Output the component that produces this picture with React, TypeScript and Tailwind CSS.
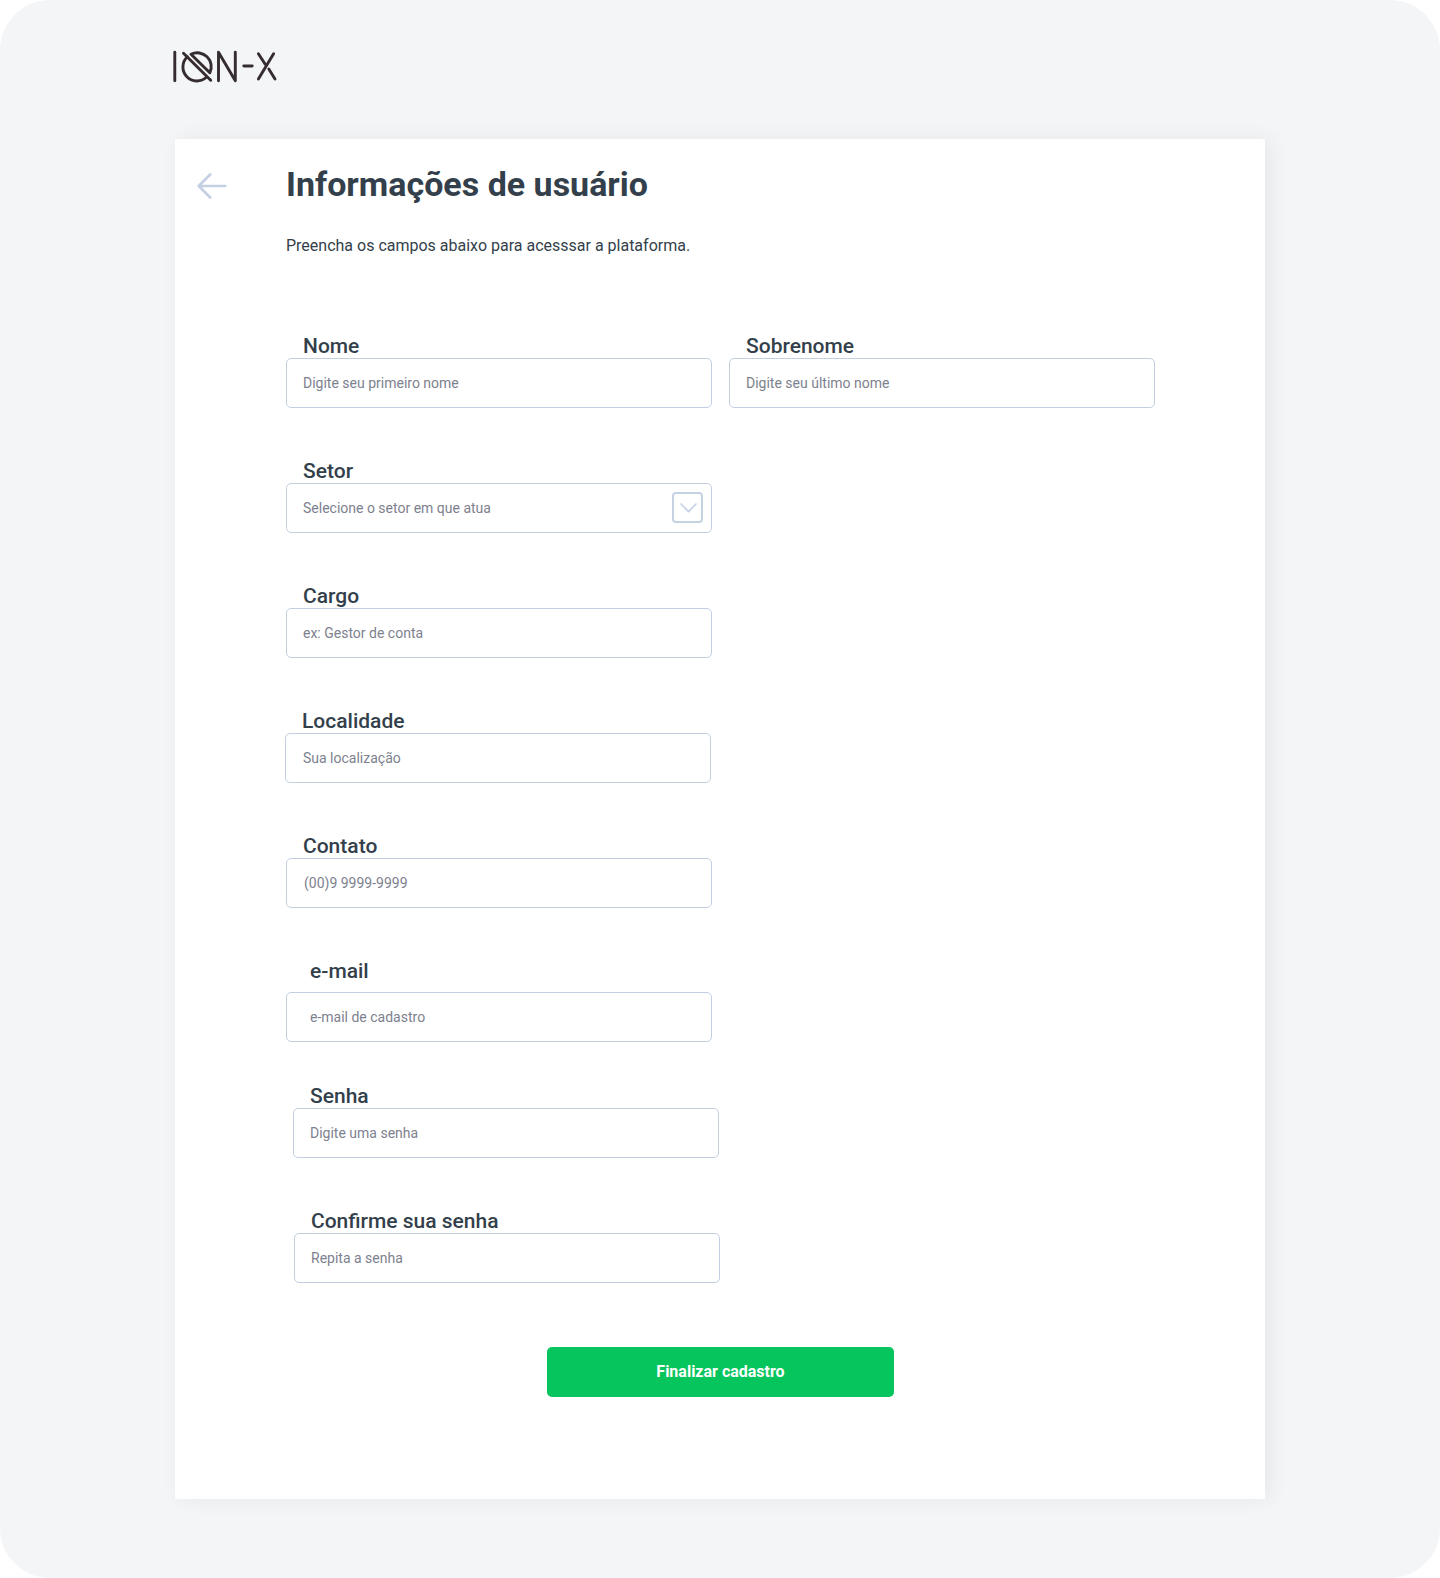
import React from "react";

type FieldProps = {
  id: string;
  label: string;
  placeholder: string;
  type?: string;
  labelClass?: string;
  inputClass?: string;
  select?: boolean;
};

function Field({ id, label, placeholder, type = "text", labelClass = "pl-[17px]", inputClass = "pl-4", select }: FieldProps) {
  return (
    <div className="relative h-[75px] w-[426px]">
      <label htmlFor={id} className={`block h-[25px] text-[21px] leading-[27px] font-medium whitespace-nowrap text-[#333f4b] ${labelClass}`}>
        {label}
      </label>
      <input
        id={id}
        type={type}
        placeholder={placeholder}
        className={`block h-[50px] w-[426px] rounded-[5px] border border-[#c3cfe0] bg-white text-sm leading-4 text-[#333f4b] outline-none placeholder:text-[#7d818e] ${inputClass}`}
      />
      {select && (
        <span className="absolute right-[9px] bottom-[10px] flex size-[31px] items-center justify-center rounded-[4px] border-2 border-[#c5d2e4]">
          <svg className="ml-px" width="17" height="10" viewBox="0 0 17 10" fill="none" stroke="#c5d2e4" strokeWidth="1.7" strokeLinecap="round" strokeLinejoin="round">
            <path d="M1 1l7.5 7.6L16 1" />
          </svg>
        </span>
      )}
    </div>
  );
}

function Logo() {
  return (
    <svg width="110" height="40" viewBox="170 46 110 40" fill="none" stroke="#352c30" strokeWidth="2.9" strokeLinecap="round" strokeLinejoin="round" role="img" aria-label="ION-X">
      <path d="M174.8 52.2v28.6" />
      <path d="M187.4 56.8A13.8 13.8 0 0 0 206.4 77.3" />
      <path d="M191 54.3A13.9 13.9 0 0 1 209.8 72.8Z" />
      <path d="M183.5 53.3L210.7 80.3" />
      <path d="M218.5 80.7V52.3L235.3 80.7V52.3" />
      <path d="M243.8 66h8.4" />
      <path d="M258.4 53.7L265.2 64.3M273.6 53.7L258.4 79M268.8 69L275 79" />
    </svg>
  );
}

export default function App() {
  return (
    <div className="h-[1578px] w-full overflow-hidden bg-white font-['Roboto',sans-serif]">
      <div className="flex h-full flex-col rounded-[50px] bg-[#f3f5f7]">
        <header className="h-[139px] pt-[46px] pl-[170px]">
          <Logo />
        </header>
        <main className="ml-[175px] flex h-[1360px] w-[1090px] bg-white shadow-[5px_0_20px_rgba(0,0,0,0.06)]">
          <a href="#" aria-label="Voltar" className="mt-[34px] ml-[22px] h-[26px] w-[89px] shrink-0">
            <svg width="30" height="26" viewBox="0 0 30 26" fill="none" stroke="#c3cfe3" strokeWidth="2.6" strokeLinecap="round" strokeLinejoin="round">
              <path d="M28.3 13H1.7M13.2 1.5L1.7 13l11.5 11.5" />
            </svg>
          </a>
          <form className="w-[869px]">
            <h1 className="mt-6 h-[42px] text-[34px] leading-[42px] font-bold text-[#333f4b]">Informações de usuário</h1>
            <p className="mt-[31px] h-5 text-base leading-5 text-[#333f4b]">Preencha os campos abaixo para acesssar a plataforma.</p>
            <div className="mt-[77px] flex gap-[17px]">
              <Field id="nome" label="Nome" placeholder="Digite seu primeiro nome" />
              <Field id="sobrenome" label="Sobrenome" placeholder="Digite seu último nome" />
            </div>
            <div className="mt-[50px] flex flex-col gap-[50px]">
              <Field id="setor" label="Setor" placeholder="Selecione o setor em que atua" select />
              <Field id="cargo" label="Cargo" placeholder="ex: Gestor de conta" />
              <div className="-ml-px">
                <Field id="localidade" label="Localidade" placeholder="Sua localização" inputClass="pl-[17px]" />
              </div>
              <Field id="contato" label="Contato" placeholder="(00)9 9999-9999" inputClass="pl-[17px]" />
              <Field id="email" label="e-mail" placeholder="e-mail de cadastro" labelClass="mb-[9px] pl-6" inputClass="pl-[23px]" />
              <div className="ml-[7px]">
                <Field id="senha" label="Senha" placeholder="Digite uma senha" type="password" />
              </div>
              <div className="ml-2">
                <Field id="confirma" label="Confirme sua senha" placeholder="Repita a senha" type="password" />
              </div>
            </div>
            <button type="button" className="mt-16 ml-[261px] block h-[50px] w-[347px] rounded-[5px] bg-[#05c55c] text-base leading-5 font-bold text-white">
              Finalizar cadastro
            </button>
          </form>
        </main>
      </div>
    </div>
  );
}
